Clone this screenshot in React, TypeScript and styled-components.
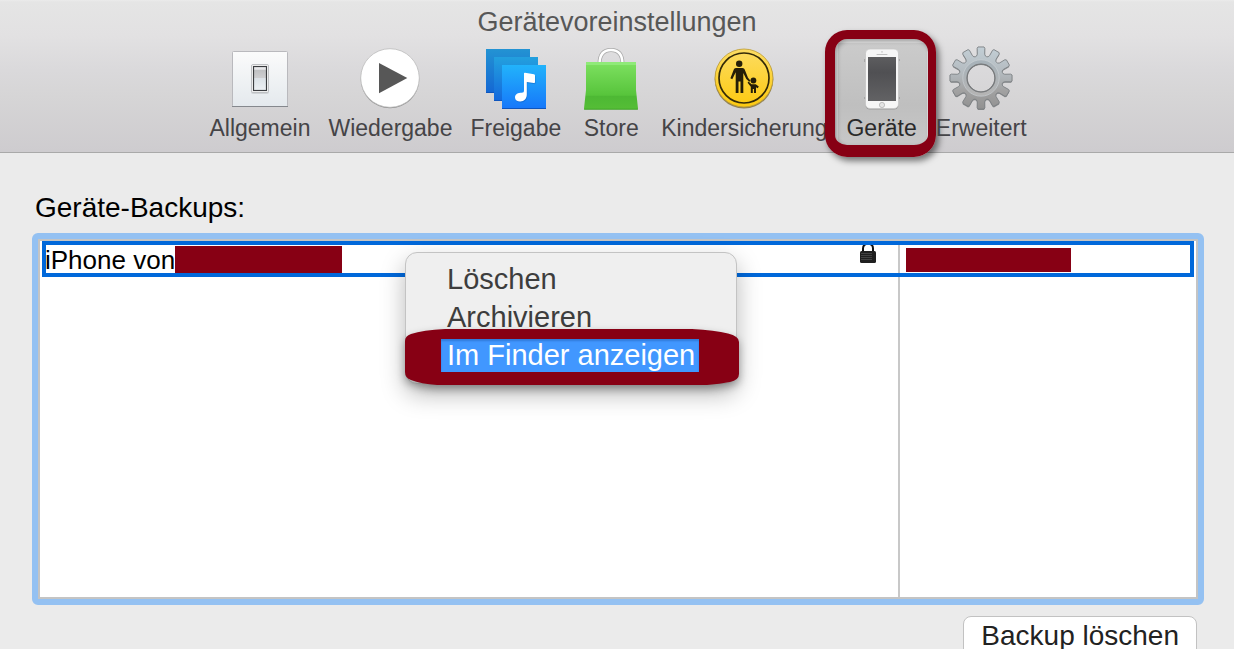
import React from "react";
import styled, { createGlobalStyle } from "styled-components";

const MAROON = "#870014";

const GlobalStyle = createGlobalStyle`
  *, *::before, *::after { box-sizing: border-box; }
  body {
    margin: 0;
    background: #ebebeb;
    font-family: "Liberation Sans", Arial, sans-serif;
  }
  button { font: inherit; color: inherit; }
`;

const Window = styled.div`
  height: 100vh;
  overflow: hidden;
  background: #ebebeb;
`;

const Header = styled.header`
  display: flex;
  flex-direction: column;
  align-items: center;
  gap: 8px;
  height: 153px;
  padding-top: 6px;
  border-bottom: 1px solid #a9a9a9;
  background: linear-gradient(#ebebeb 0, #e5e5e5 2px, #e2e1e2 36px, #dad9db 70px, #d6d5d6 96px, #cecccf 151px);
`;

const Title = styled.h1`
  margin: 0;
  font-size: 27px;
  font-weight: 400;
  line-height: 32px;
  color: #575757;
`;

const Toolbar = styled.nav`
  display: flex;
  gap: 10px;
  padding-left: 2px;
`;

const Tool = styled.button<{ $active?: boolean }>`
  position: relative;
  display: flex;
  flex-direction: column;
  align-items: center;
  gap: 3px;
  padding: 1px ${(p) => (p.$active ? 5 : 4)}px 5px;
  border: 0;
  background: none;
  font-size: 23px;
  line-height: 28px;
  white-space: nowrap;
  color: ${(p) => (p.$active ? "#2a2a2a" : "#454447")};
`;

const SelectedTile = styled.span`
  position: absolute;
  inset: -8px -6px 0 -5px;
  border: solid #dedede;
  border-width: 5px 1px 0 2px;
  background: linear-gradient(#cbcbcb, #bfbfbf 60%, #c8c8c8);
`;

const ToolFrame = styled.span`
  position: absolute;
  inset: -16px -14px -10px -16px;
  border: solid ${MAROON};
  border-width: 9px 8px 12px 10px;
  border-radius: 22px;
  box-shadow: 3px 4px 6px rgba(0, 0, 0, 0.5), inset 2px 2px 4px rgba(0, 0, 0, 0.3);
`;

const ToolIcon = styled.svg`
  position: relative;
  display: block;
  width: 64px;
  height: 64px;
  overflow: visible;
`;

const ToolLabel = styled.span`
  position: relative;
`;

const Content = styled.main`
  padding: 39px 30px 0 32px;
`;

const Heading = styled.h2`
  margin: 0 0 9px;
  padding-left: 3px;
  font-size: 28px;
  font-weight: 400;
  line-height: 32px;
  color: #000;
`;

const ListFocus = styled.section`
  position: relative;
  border: 6px solid #94c1f2;
  border-radius: 6px;
  background: #94c1f2;
`;

const ListBox = styled.div`
  padding: 0 2px;
  border: 2px solid #c4c4c4;
  background: #fff;
`;

const BackupTable = styled.table`
  width: 100%;
  table-layout: fixed;
  border-spacing: 0;
  font-size: 26px;
  line-height: 30px;
  color: #000;

  td { padding: 0; }
  td + td { width: 296px; border-left: 2px solid #c8c8c8; }
`;

const SelectedRow = styled.tr`
  height: 36px;
  outline: 4px solid #0068da;
  outline-offset: -4px;
`;

const FillerRow = styled.tr`
  height: 320px;
`;

const CellContent = styled.div<{ $inset: number }>`
  display: flex;
  align-items: center;
  height: 36px;
  padding: 2px 22px 0 ${(p) => p.$inset}px;
`;

const Redacted = styled.span<{ $width: number; $height: number }>`
  width: ${(p) => p.$width}px;
  height: ${(p) => p.$height}px;
  background: ${MAROON};
`;

const LockIcon = styled.svg`
  align-self: flex-start;
  width: 16px;
  height: 20px;
  margin-left: auto;
`;

const ContextMenu = styled.div`
  position: absolute;
  top: 13px;
  left: 367px;
  display: flex;
  flex-direction: column;
  width: 332px;
  padding: 7px 0 9px;
  border: 1px solid #c3c3c3;
  border-radius: 12px;
  background: #efefef;
  box-shadow: 0 10px 24px rgba(0, 0, 0, 0.28);
`;

const MenuItem = styled.button`
  position: relative;
  height: 38px;
  padding: 0 0 0 41px;
  border: 0;
  background: none;
  font-size: 29px;
  line-height: 38px;
  text-align: left;
  color: #3d3d3d;
`;

const MenuMark = styled.svg`
  position: absolute;
  top: -7px;
  left: -1px;
  width: 334px;
  height: 56px;
  overflow: visible;
  filter: drop-shadow(0 4px 4px rgba(0, 0, 0, 0.35));
`;

const Highlight = styled.span`
  position: absolute;
  top: 3px;
  left: 35px;
  width: 258px;
  padding-left: 6px;
  line-height: 33px;
  white-space: nowrap;
  color: #fff;
  background: #4197ff;
  box-shadow: inset 0 2px 2px rgba(0, 40, 110, 0.25);
`;

const Actions = styled.div`
  display: flex;
  justify-content: flex-end;
  padding: 11px 7px 0 0;
`;

const PushButton = styled.button`
  padding: 3px 17px 6px;
  border: 1px solid #c2c2c2;
  border-radius: 8px;
  background: #fff;
  font-size: 28px;
  line-height: 32px;
  color: #222;
`;

const SwitchIcon = () => (
  <ToolIcon viewBox="0 0 64 64" aria-hidden="true">
    <defs>
      <linearGradient id="plate" x2="0" y2="1">
        <stop stopColor="#fbfbfb" />
        <stop offset="1" stopColor="#e4e9ed" />
      </linearGradient>
      <linearGradient id="rocker" x2="0" y2="1">
        <stop stopColor="#e8e8ea" />
        <stop offset=".12" stopColor="#e8e8ea" />
        <stop offset=".14" stopColor="#bfc0c2" />
        <stop offset=".48" stopColor="#cfcfd1" />
        <stop offset=".5" stopColor="#dce2e7" />
        <stop offset="1" stopColor="#edf1f4" />
      </linearGradient>
    </defs>
    <rect x="4.5" y="4.5" width="55" height="55" rx="1" fill="url(#plate)" stroke="#b9b9bd" />
    <path d="M4 59.5h56" stroke="#85888d" />
    <rect x="23" y="18" width="18" height="29" rx="2" fill="#c0c3c6" opacity=".6" />
    <rect x="23.5" y="17.5" width="17" height="28" rx="1.5" fill="#fff" stroke="#bfc1c4" />
    <rect x="25.5" y="19.5" width="13" height="24" fill="url(#rocker)" stroke="#3b3d40" strokeWidth="1.2" />
  </ToolIcon>
);

const PlayIcon = () => (
  <ToolIcon viewBox="0 0 64 64" aria-hidden="true">
    <circle cx="32" cy="32" r="29.3" fill="#8f8f8f" />
    <circle cx="32" cy="31" r="29.3" fill="#fff" stroke="#bcbcbc" strokeWidth=".8" />
    <path d="M21 16v30.2l28.3-15.1z" fill="#575757" />
  </ToolIcon>
);

const NOTE =
  "M40 26.5q0-1 1-.8l9 1.6q1 .2 1 1.3v6.500q0 1.200-1.200 1l-7-1.200v12.600c0 4-2.500 7-6.600 7-3 0-5.200-1.400-5.200-4 0-3.400 3.200-4.700 6.500-4.700 2 0 2.500-.8 2.500-2.500z";

const SharingIcon = () => (
  <ToolIcon viewBox="0 0 64 64" aria-hidden="true">
    <defs>
      <linearGradient id="backCard" x2="0" y2="1">
        <stop stopColor="#2393d3" />
        <stop offset="1" stopColor="#1467d3" />
      </linearGradient>
      <linearGradient id="midCard" x2="0" y2="1">
        <stop stopColor="#23a0de" />
        <stop offset="1" stopColor="#1468dc" />
      </linearGradient>
      <linearGradient id="frontCard" x2="0" y2="1">
        <stop stopColor="#22b3fb" />
        <stop offset="1" stopColor="#1677fa" />
      </linearGradient>
    </defs>
    <rect x="2" y="2" width="44" height="44" fill="url(#backCard)" />
    <path d="M2 45.5h44" stroke="#0e55bd" />
    <rect x="10" y="10" width="44" height="44" fill="url(#midCard)" />
    <path d="M10 53.5h44" stroke="#0e55bd" />
    <rect x="18" y="18" width="44" height="44" fill="url(#frontCard)" />
    <path d="M18 61.5h44" stroke="#0e55bd" />
    <path d={NOTE} fill="#0958b5" opacity=".45" transform="translate(.5 1)" />
    <path d={NOTE} fill="#fff" />
  </ToolIcon>
);

const StoreIcon = () => (
  <ToolIcon viewBox="0 0 64 64" aria-hidden="true">
    <defs>
      <linearGradient id="bag" x2="0" y2="1">
        <stop stopColor="#7ee161" />
        <stop offset=".7" stopColor="#57c43b" />
        <stop offset=".72" stopColor="#4db834" />
        <stop offset="1" stopColor="#55be36" />
      </linearGradient>
    </defs>
    <path d="M20.500 17c0-9 4-14 11.500-14s11.500 5 11.500 14" fill="none" stroke="#a9a9a9" strokeWidth="4" />
    <path d="M20.500 17c0-9 4-14 11.500-14s11.500 5 11.500 14" fill="none" stroke="#fff" strokeWidth="2.400" />
    <path d="M7 15h50v28l2 18.500q0 1-1 1H6q-1 0-1-1L7 43z" fill="url(#bag)" />
    <path d="M7 15h50v3H7z" fill="#8fea78" />
    <path d="M5 62.200h54" stroke="#3b9d26" strokeWidth=".8" />
  </ToolIcon>
);

const ParentalIcon = () => (
  <ToolIcon viewBox="0 0 64 64" aria-hidden="true">
    <defs>
      <linearGradient id="sign" x2="0" y2="1">
        <stop stopColor="#fcdc62" />
        <stop offset="1" stopColor="#fdca10" />
      </linearGradient>
    </defs>
    <circle cx="32" cy="32.2" r="29.3" fill="#8e8055" />
    <circle cx="32" cy="31" r="29" fill="url(#sign)" stroke="#bb9a35" strokeWidth=".8" />
    <circle cx="32" cy="31" r="25" fill="none" stroke="#332a08" strokeWidth="1.7" />
    <g fill="#241e08">
      <circle cx="27.2" cy="16.8" r="3.2" />
      <path d="M24 21h6.500c1.300 0 1.800.7 2.300 1.800l3.200 8 2.500 3-1.200 1-3-2.800-3-6V46h-2.800V34.500h-2V46h-2.800V25.200l-3.400 7-1.900-.9 3.200-8.300c.5-1.300 1-2 2.400-2z" />
      <circle cx="41.4" cy="33.5" r="2.9" />
      <path d="M36.500 34.500l3 2.800h4.200l3.100 2.200-1.100 1.700-1.700-1V46h-2v-4h-1.200v4h-2v-6.300l-3.200-4z" />
    </g>
  </ToolIcon>
);

const PhoneIcon = () => (
  <ToolIcon viewBox="0 0 64 64" aria-hidden="true">
    <defs>
      <linearGradient id="glass" x2="0" y2="1">
        <stop stopColor="#5d5d5f" />
        <stop offset=".35" stopColor="#505053" />
        <stop offset="1" stopColor="#626264" />
      </linearGradient>
    </defs>
    <path d="M15 12v3M15 50v2M49 12v2M49 50v2" stroke="#888" />
    <rect x="15.5" y="2.5" width="33" height="60" rx="4.5" fill="#999" />
    <rect x="15.5" y="2" width="33" height="59.5" rx="4.5" fill="#f6f6f6" stroke="#c5c5c5" strokeWidth=".7" />
    <rect x="18" y="10" width="28" height="44" fill="url(#glass)" />
    <circle cx="32" cy="4.8" r=".9" fill="#ccc" />
    <path d="M27 7.5h10" stroke="#c0c0c0" strokeLinecap="round" />
    <circle cx="32" cy="58" r="2.6" fill="#e4e4e4" stroke="#b3b3b3" strokeWidth=".8" />
  </ToolIcon>
);

const TOOTH_PROFILE = [
  [-15, 22],
  [-11.5, 22.4],
  [-9, 24],
  [-7.4, 30],
  [-5.5, 31.2],
  [5.5, 31.2],
  [7.4, 30],
  [9, 24],
  [11.5, 22.4],
];

const GEAR_OUTLINE =
  Array.from({ length: 12 }, (_, tooth) =>
    TOOTH_PROFILE.map(([offset, radius]) => {
      const angle = ((tooth * 30 + offset) * Math.PI) / 180;
      return `${(32 + radius * Math.sin(angle)).toFixed(2)} ${(31 - radius * Math.cos(angle)).toFixed(2)}`;
    }).join("L"),
  ).join("L");

const GEAR = `M${GEAR_OUTLINE}ZM18 31a14 14 0 1 0 28 0a14 14 0 1 0-28 0Z`;

const GearIcon = () => (
  <ToolIcon viewBox="0 0 64 64" aria-hidden="true">
    <defs>
      <linearGradient id="steel" x2="0" y2="1">
        <stop stopColor="#c3cfd6" />
        <stop offset=".4" stopColor="#b4bbc0" />
        <stop offset=".7" stopColor="#a2a2a2" />
        <stop offset="1" stopColor="#919191" />
      </linearGradient>
      <linearGradient id="ring" x2="0" y2="1">
        <stop stopColor="#a7b2b9" />
        <stop offset="1" stopColor="#b4b4b4" />
      </linearGradient>
    </defs>
    <path d={GEAR} fillRule="evenodd" fill="#6a6c6e" opacity=".7" transform="translate(0 1)" />
    <path d={GEAR} fillRule="evenodd" fill="url(#steel)" stroke="#7c8083" strokeWidth=".9" strokeLinejoin="round" />
    <circle cx="32" cy="31" r="16.2" fill="none" stroke="url(#ring)" strokeWidth="3.6" />
    <circle cx="32" cy="31" r="18.2" fill="none" stroke="#c9cfd3" strokeWidth=".7" />
    <circle cx="32" cy="31" r="14" fill="none" stroke="#77797b" strokeWidth="1.2" />
  </ToolIcon>
);

const tools = [
  { label: "Allgemein", Icon: SwitchIcon },
  { label: "Wiedergabe", Icon: PlayIcon },
  { label: "Freigabe", Icon: SharingIcon },
  { label: "Store", Icon: StoreIcon },
  { label: "Kindersicherung", Icon: ParentalIcon },
  { label: "Geräte", Icon: PhoneIcon, active: true },
  { label: "Erweitert", Icon: GearIcon },
];

export default function App() {
  return (
    <Window>
      <GlobalStyle />
      <Header>
        <Title>Gerätevoreinstellungen</Title>
        <Toolbar>
          {tools.map(({ label, Icon, active }) => (
            <Tool key={label} type="button" $active={active} aria-pressed={!!active}>
              {active && <SelectedTile />}
              <Icon />
              <ToolLabel>{label}</ToolLabel>
              {active && <ToolFrame />}
            </Tool>
          ))}
        </Toolbar>
      </Header>
      <Content>
        <Heading id="backups">Geräte-Backups:</Heading>
        <ListFocus>
          <ListBox>
            <BackupTable aria-labelledby="backups">
              <tbody>
                <SelectedRow>
                  <td>
                    <CellContent $inset={3}>
                      iPhone von
                      <Redacted $width={167} $height={28} />
                      <LockIcon viewBox="0 0 16 20" aria-hidden="true">
                        <path d="M3 9V5.500C3 2.500 5 .8 8 .8s5 1.700 5 4.700V9" fill="none" stroke="#111" strokeWidth="2" />
                        <rect y="8" width="16" height="12" rx="1.5" fill="#1f1f1f" />
                        <path d="M1 10.500h11M1 12.500h11M1 14.500h11M1 16.500h11" stroke="#4a4a4a" strokeWidth=".8" />
                      </LockIcon>
                    </CellContent>
                  </td>
                  <td>
                    <CellContent $inset={6}>
                      <Redacted $width={165} $height={24} />
                    </CellContent>
                  </td>
                </SelectedRow>
                <FillerRow>
                  <td />
                  <td />
                </FillerRow>
              </tbody>
            </BackupTable>
          </ListBox>
          <ContextMenu role="menu">
            <MenuItem type="button" role="menuitem">Löschen</MenuItem>
            <MenuItem type="button" role="menuitem">Archivieren</MenuItem>
            <MenuItem type="button" role="menuitem">
              <MenuMark viewBox="0 0 334 56" aria-hidden="true">
                <path
                  d="M40 0H287Q310 1 323 4.500Q334 7 334 13V45Q334 51 325 53Q315 55 302 56H32Q16 55 6 51Q0 49 0 43V12Q0 7 6 5Q18 1 40 0z"
                  fill={MAROON}
                />
              </MenuMark>
              <Highlight>Im Finder anzeigen</Highlight>
            </MenuItem>
          </ContextMenu>
        </ListFocus>
        <Actions>
          <PushButton type="button">Backup löschen</PushButton>
        </Actions>
      </Content>
    </Window>
  );
}
